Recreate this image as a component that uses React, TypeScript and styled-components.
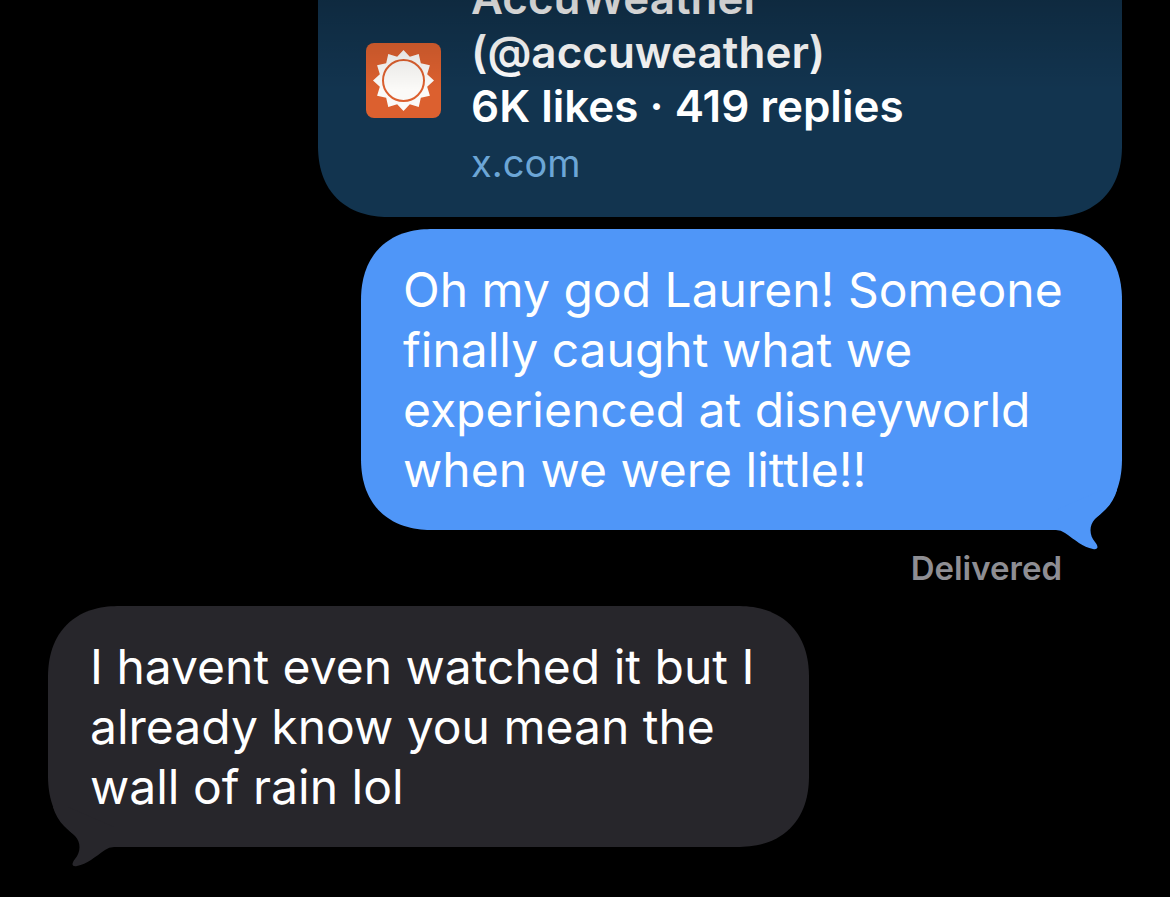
import React from "react";
import styled, { createGlobalStyle } from "styled-components";

const GlobalStyle = createGlobalStyle`
  *, *::before, *::after { box-sizing: border-box; }
  body {
    margin: 0;
    background: #000;
    font-family: Inter, "Liberation Sans", sans-serif;
  }
`;

const Thread = styled.main`
  position: relative;
  display: flex;
  flex-direction: column;
  justify-content: flex-end;
  height: 100vh;
  overflow: hidden;
  padding: 0 48px 50px;
  background: #000;

  &::before {
    content: "";
    position: absolute;
    z-index: 1;
    inset: 0 0 auto;
    height: 90px;
    background: linear-gradient(rgba(0, 0, 0, 0.2), rgba(0, 0, 0, 0));
    pointer-events: none;
  }
`;

const LinkCard = styled.a`
  display: flex;
  align-items: center;
  align-self: flex-end;
  flex-shrink: 0;
  gap: 30px;
  width: 100%;
  max-width: 804px;
  margin-bottom: 12px;
  padding: 28px 48px;
  border-radius: 0 0 72px 72px;
  corner-shape: superellipse(1.2);
  background: #12344f;
  color: #fff;
  text-decoration: none;
`;

const SiteIcon = styled.svg`
  flex: none;
  width: 75px;
  height: 75px;
`;

const CardText = styled.div`
  display: flex;
  flex-direction: column;
  gap: 4px;
`;

const CardTitle = styled.span`
  font-size: 44px;
  font-weight: 600;
  line-height: 54px;
`;

const CardDomain = styled.span`
  color: #6ca6d6;
  font-size: 38px;
  line-height: 52px;
`;

const Bubble = styled.div<{ $sent?: boolean }>`
  position: relative;
  flex-shrink: 0;
  align-self: ${(p) => (p.$sent ? "flex-end" : "flex-start")};
  width: 100%;
  max-width: 761px;
  padding: 31px 42px 30px;
  border-radius: 72px;
  corner-shape: superellipse(1.2);
  background: ${(p) => (p.$sent ? "#4f96f8" : "#27262b")};
  color: ${(p) => (p.$sent ? "#4f96f8" : "#27262b")};
`;

const Message = styled.p`
  margin: 0;
  color: #fff;
  font-size: 48px;
  line-height: 60px;
`;

const Tail = styled.svg<{ $sent?: boolean }>`
  position: absolute;
  bottom: -20px;
  ${(p) => (p.$sent ? "right: 0;" : "left: 0; transform: scaleX(-1);")}
  width: 80px;
  height: 60px;
  fill: currentColor;
`;

const Status = styled.p`
  align-self: flex-end;
  margin: 18px 60px 18px 0;
  color: #8e8e93;
  font-size: 33px;
  font-weight: 600;
  line-height: 40px;
`;

const sunPoints = Array.from({ length: 24 }, (_, i) => {
  const radius = i % 2 ? 24.5 : 30.5;
  const angle = (i * Math.PI) / 12;
  return `${37.5 + radius * Math.sin(angle)},${37.5 - radius * Math.cos(angle)}`;
}).join(" ");

function SunIcon() {
  return (
    <SiteIcon viewBox="0 0 75 75" aria-hidden="true">
      <rect width="75" height="75" rx="8" fill="#dc602f" />
      <polygon points={sunPoints} fill="#fbfaf8" />
      <circle cx="37.5" cy="37.5" r="20.5" fill="none" stroke="#dc602f" strokeWidth="2" />
    </SiteIcon>
  );
}

function BubbleTail({ sent }: { sent?: boolean }) {
  return (
    <Tail $sent={sent} viewBox="0 0 80 60" aria-hidden="true">
      <path d="M75 0 C73 7 69 14 64 19 C60 23 56 26 53 29 C47 35 47 45 53 52 C57 57 56 60 51 59 C41 57 33 50 23 43 Q19 40 14 40 L14 20 L60 0 Z" />
    </Tail>
  );
}

export default function App() {
  return (
    <>
      <GlobalStyle />
      <Thread>
        <LinkCard href="https://x.com/accuweather">
          <SunIcon />
          <CardText>
            <CardTitle>
              AccuWeather
              <br />
              (@accuweather)
              <br />
              6K likes · 419 replies
            </CardTitle>
            <CardDomain>x.com</CardDomain>
          </CardText>
        </LinkCard>
        <Bubble $sent>
          <Message>
            Oh my god Lauren! Someone finally caught what we experienced at disneyworld when we
            were little!!
          </Message>
          <BubbleTail sent />
        </Bubble>
        <Status>Delivered</Status>
        <Bubble>
          <Message>I havent even watched it but I already know you mean the wall of rain lol</Message>
          <BubbleTail />
        </Bubble>
      </Thread>
    </>
  );
}
